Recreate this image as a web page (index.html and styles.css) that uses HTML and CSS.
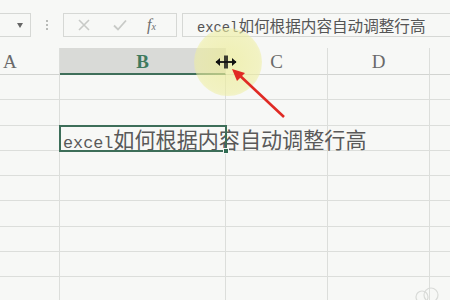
FILE: index.html
```html
<!DOCTYPE html>
<html>
<head>
  <meta charset="UTF-8">
  <title>excel如何根据内容自动调整行高</title>
  <link rel="stylesheet" href="styles.css">
</head>
<body>
  <div class="toolbar">
    <div class="namebox"><span class="caret"></span></div>
    <div class="dots"><i></i><i></i><i></i></div>
    <div class="fxbox">
      <svg class="btn" width="12" height="12" viewBox="0 0 12 12"><path d="M1 1L11 11M11 1L1 11" stroke="#c8cac7" stroke-width="1.6" fill="none"/></svg>
      <svg class="btn" width="14" height="12" viewBox="0 0 14 12"><path d="M1 6.5L5 10.5L13 1.5" stroke="#c8cac7" stroke-width="1.8" fill="none"/></svg>
      <span class="fx">f<small>x</small></span>
    </div>
    <div class="formula"><span class="latin">excel</span>如何根据内容自动调整行高</div>
  </div>

  <div class="sheet">
    <div class="head">A</div>
    <div class="head active">B</div>
    <div class="head">C</div>
    <div class="head">D</div>
    <div class="head"></div>

    <div class="cell"></div><div class="cell"></div><div class="cell"></div><div class="cell"></div><div class="cell"></div>
    <div class="cell"></div><div class="cell"></div><div class="cell"></div><div class="cell"></div><div class="cell"></div>
    <div class="cell"></div>
    <div class="cell selected"><span class="latin">excel</span>如何根据内容自动调整行高<span class="handle"></span></div>
    <div class="cell"></div><div class="cell"></div><div class="cell"></div>
    <div class="cell"></div><div class="cell"></div><div class="cell"></div><div class="cell"></div><div class="cell"></div>
    <div class="cell"></div><div class="cell"></div><div class="cell"></div><div class="cell"></div><div class="cell"></div>
    <div class="cell"></div><div class="cell"></div><div class="cell"></div><div class="cell"></div><div class="cell"></div>
    <div class="cell"></div><div class="cell"></div><div class="cell"></div><div class="cell"></div><div class="cell"></div>
    <div class="cell"></div><div class="cell"></div><div class="cell"></div><div class="cell"></div><div class="cell"></div>
    <div class="cell"></div><div class="cell"></div><div class="cell"></div><div class="cell"></div><div class="cell"></div>
  </div>

  <!-- screen recording overlays -->
  <div class="spot"></div>
  <svg class="cursor" width="22" height="14" viewBox="0 0 22 14">
    <path d="M10 0.5V13.5M12 0.5V13.5" stroke="#111" stroke-width="1.6"/>
    <path d="M1 7H21" stroke="#111" stroke-width="1.8"/>
    <path d="M0.5 7L5 3V11Z M21.5 7L17 3V11Z" fill="#111"/>
  </svg>
  <svg class="arrow" width="60" height="52" viewBox="0 0 60 52">
    <path d="M55 49L7 4" stroke="#e02a24" stroke-width="2.6" fill="none"/>
    <path d="M3 1L16 5L8 13Z" fill="#e02a24"/>
  </svg>
  <svg class="mark" width="30" height="20" viewBox="0 0 30 20">
    <circle cx="10" cy="12" r="6" stroke="#d9dbd8" stroke-width="1.2" fill="none"/>
    <circle cx="19" cy="10" r="7" stroke="#d9dbd8" stroke-width="1.2" fill="none"/>
  </svg>
</body>
</html>
```

FILE: styles.css
```css
* { box-sizing: border-box; }
body {
  margin: 0;
  width: 450px;
  height: 300px;
  overflow: hidden;
  position: relative;
  background: #f7f8f6;
  font-family: "Liberation Serif", "Noto Sans CJK SC", serif;
  color: #555;
}
.latin { font-family: "Liberation Mono", monospace; }

.toolbar {
  display: flex;
  align-items: center;
  height: 24px;
  margin-top: 13px;
}
.namebox {
  width: 32px;
  height: 24px;
  margin-left: -1px;
  border: 1px solid #d6d8d5;
  position: relative;
}
.caret {
  position: absolute;
  left: 17px;
  top: 9px;
  border-left: 3.5px solid transparent;
  border-right: 3.5px solid transparent;
  border-top: 5px solid #666;
}
.dots {
  width: 32px;
  display: flex;
  flex-direction: column;
  align-items: center;
  gap: 2px;
}
.dots i {
  width: 2px;
  height: 2px;
  background: #b9bbb8;
}
.fxbox {
  width: 114px;
  height: 24px;
  border: 1px solid #d6d8d5;
  display: flex;
  align-items: center;
  padding-left: 14px;
  gap: 23px;
}
.fx {
  font-family: "Liberation Serif", serif;
  font-style: italic;
  font-size: 16px;
  color: #6f6f6f;
  margin-left: -3px;
}
.fx small { font-size: 10px; }
.formula {
  flex: 1;
  height: 24px;
  margin-left: 5px;
  margin-right: -4px;
  border: 1px solid #d6d8d5;
  padding-left: 14px;
  font-family: "Noto Sans CJK SC", sans-serif;
  font-size: 15.6px;
  line-height: 22px;
  color: #555;
  white-space: nowrap;
}
.formula .latin { font-size: 13.8px; }

.sheet {
  display: grid;
  grid-template-columns: 60px 166px 102px 102px 40px;
  grid-template-rows: 27px;
  grid-auto-rows: 25.3px;
  margin-top: 11px;
}
.head {
  border-right: 1px solid #dcdedb;
  border-bottom: 1px solid #d2d4d1;
  text-align: center;
  font-size: 19px;
  line-height: 28px;
  color: #6a6a6a;
}
.head:first-child { text-align: left; padding-left: 3px; }
.head.active {
  background: #d9dad7;
  border-bottom: 2px solid #3f6f5a;
  color: #3f7a5e;
  font-weight: bold;
}
.cell {
  border-right: 1px solid #dcdedb;
  border-bottom: 1px solid #dcdedb;
}
.selected {
  position: relative;
  white-space: nowrap;
  overflow: visible;
  outline: 2px solid #3d6e59;
  outline-offset: -1px;
  z-index: 1;
  padding-left: 3px;
  font-family: "Noto Sans CJK SC", sans-serif;
  font-size: 21.1px;
  line-height: 26px;
  color: #595959;
}
.selected .latin { font-size: 16.8px; }
.handle {
  position: absolute;
  right: -4px;
  bottom: -4px;
  width: 6px;
  height: 6px;
  background: #2f6b52;
  border: 1px solid #f7f8f6;
}

.spot {
  position: absolute;
  left: 194px;
  top: 28px;
  width: 68px;
  height: 68px;
  border-radius: 50%;
  background: radial-gradient(circle, rgba(236,236,150,0.7) 0%, rgba(238,238,160,0.6) 65%, rgba(240,240,170,0) 100%);
}
.cursor {
  position: absolute;
  left: 215px;
  top: 55px;
}
.arrow {
  position: absolute;
  left: 229px;
  top: 68px;
}
.mark {
  position: absolute;
  left: 412px;
  top: 285px;
}
```
